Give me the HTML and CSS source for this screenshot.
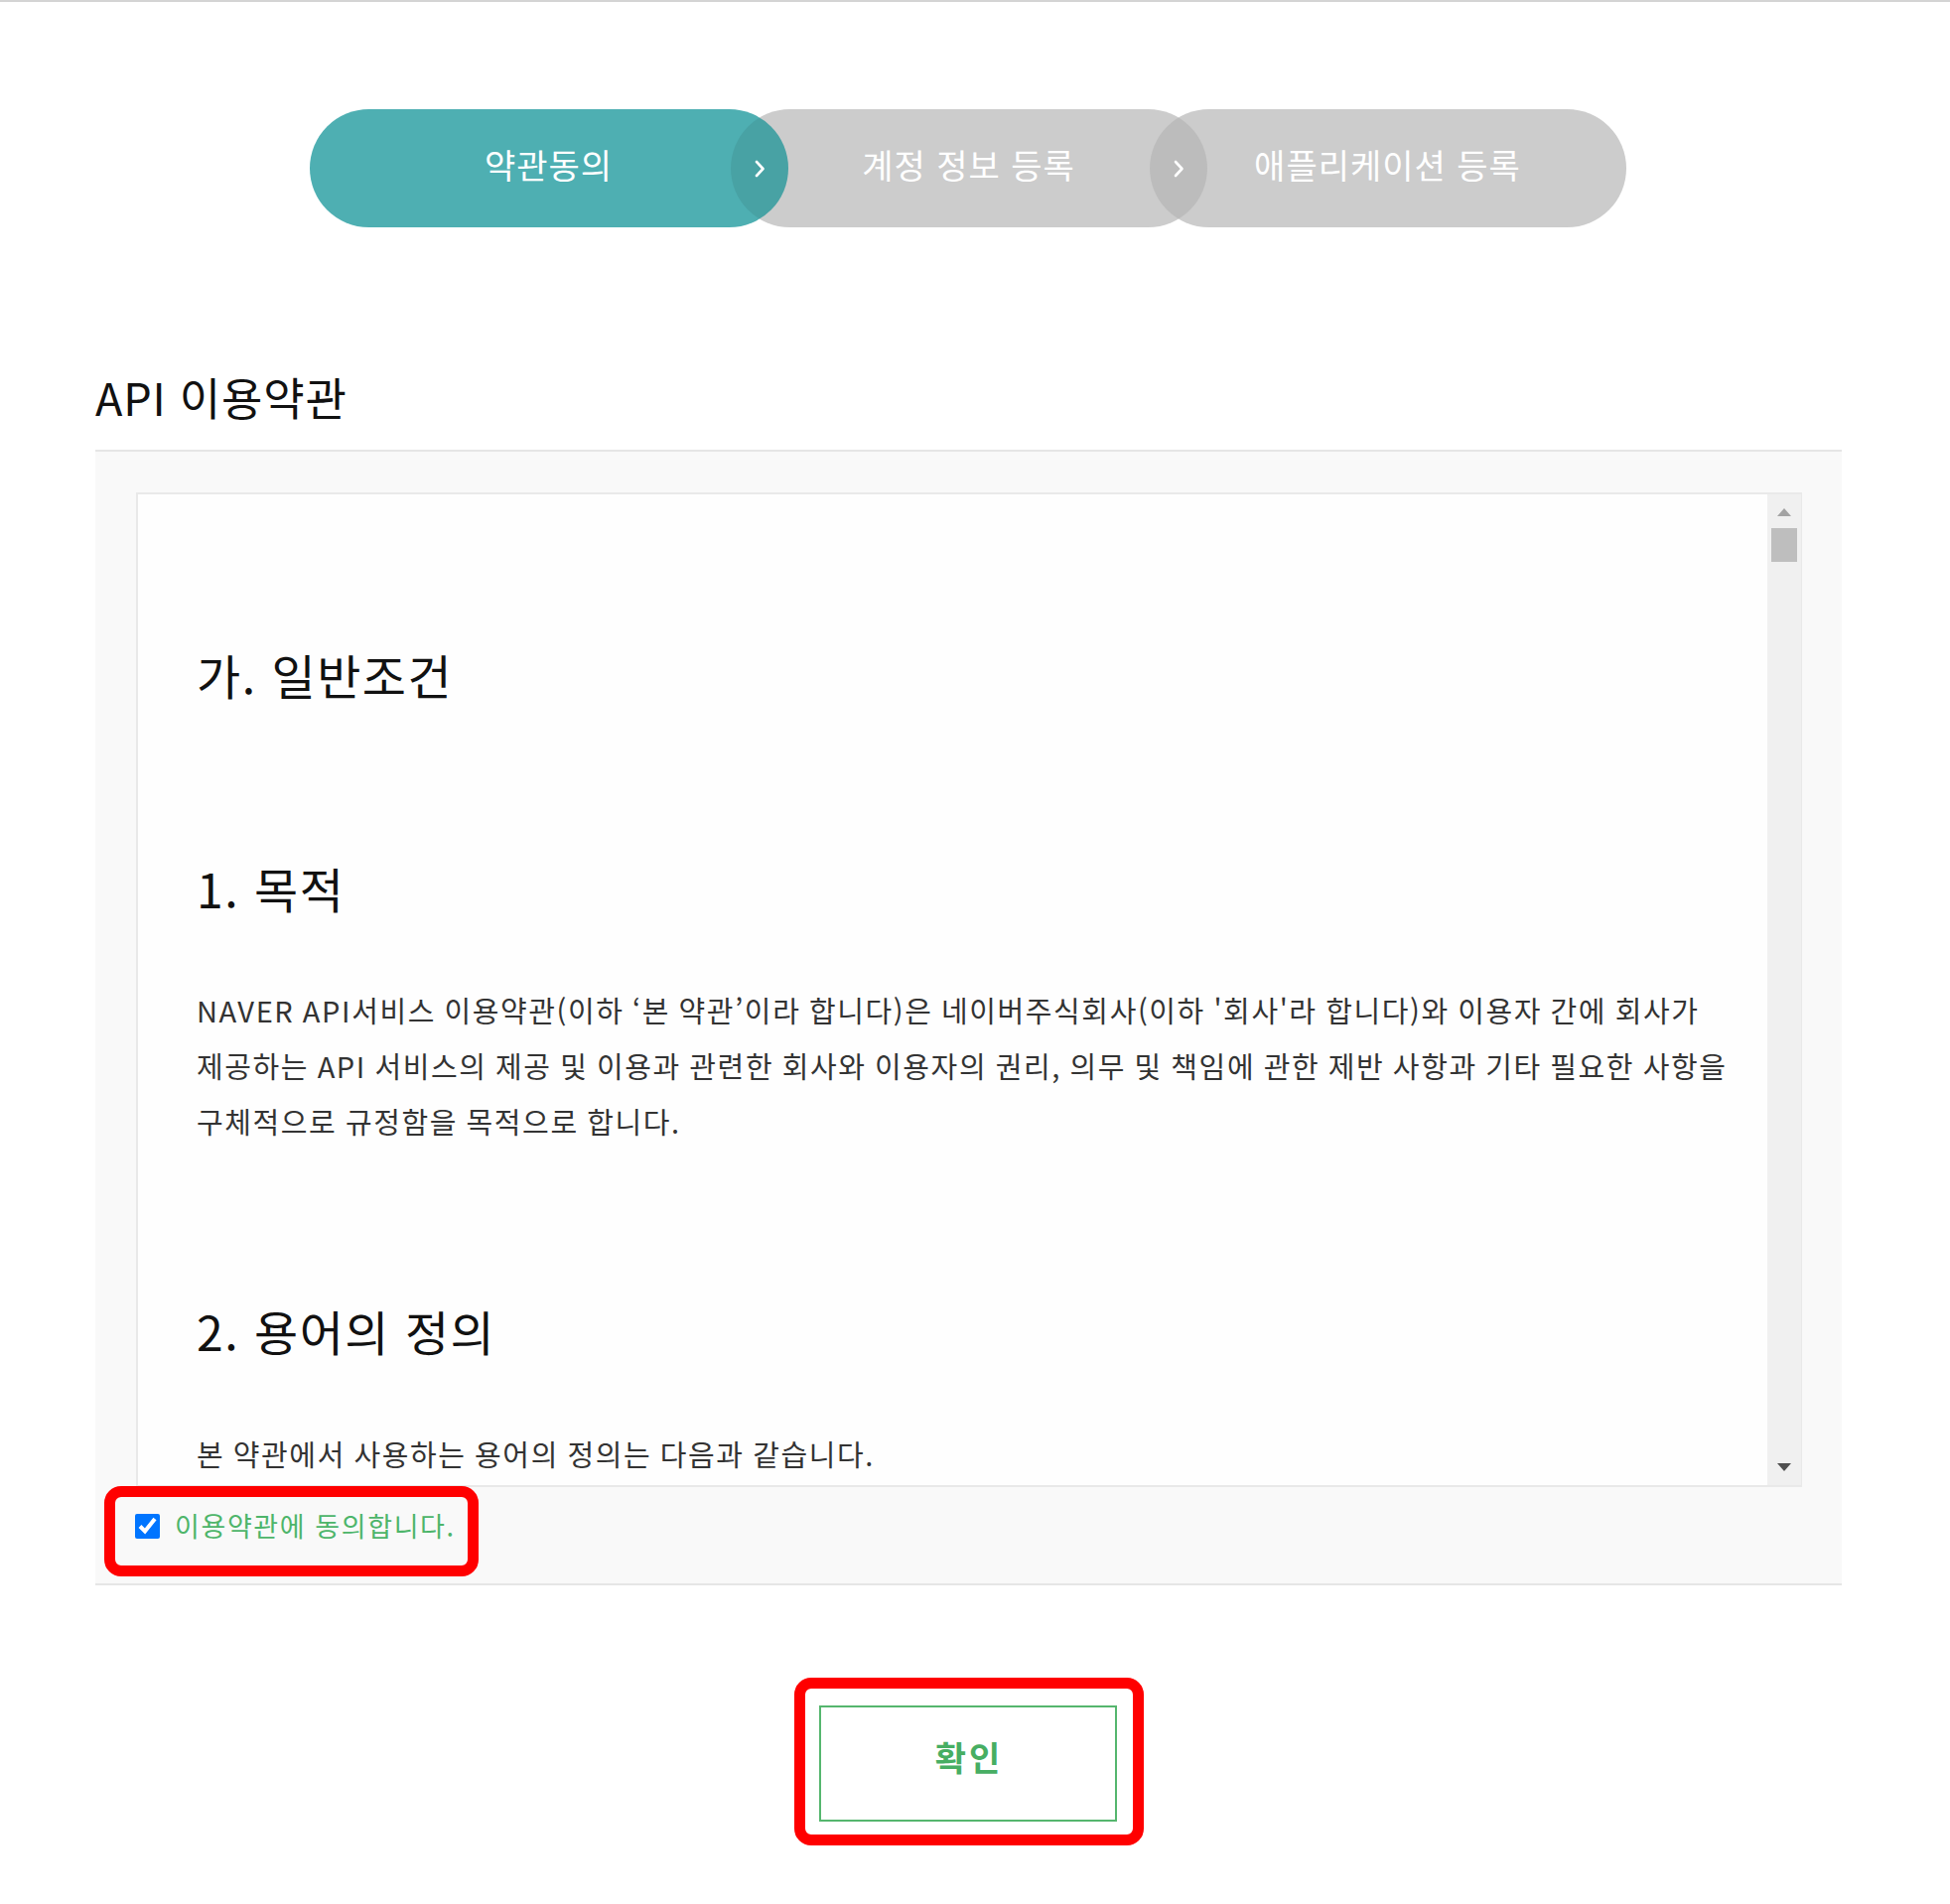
FILE: index.html
```html
<!DOCTYPE html>
<html lang="ko">
<head>
<meta charset="utf-8">
<title>API 이용약관</title>
<link rel="stylesheet" href="styles.css">
</head>
<body>
<div class="topline"></div>
<div class="page">
  <div class="steps">
    <div class="step step-active"><span class="step-label">약관동의</span><span class="chev"><svg width="14" height="20" viewBox="0 0 14 20"><path d="M4 3 L10.5 10 L4 17" fill="none" stroke="#fff" stroke-width="2.6" stroke-linecap="round" stroke-linejoin="round"/></svg></span></div>
    <div class="step step-two"><span class="step-label">계정 정보 등록</span><span class="chev"><svg width="14" height="20" viewBox="0 0 14 20"><path d="M4 3 L10.5 10 L4 17" fill="none" stroke="#fff" stroke-width="2.6" stroke-linecap="round" stroke-linejoin="round"/></svg></span></div>
    <div class="step step-three"><span class="step-label">애플리케이션 등록</span></div>
  </div>

  <h1 class="title">API 이용약관</h1>

  <div class="terms-panel">
    <div class="terms-box">
      <div class="terms-text">
        <h2 class="terms-h terms-h-first">가. 일반조건</h2>
        <h3 class="terms-h terms-h-second">1. 목적</h3>
        <p class="terms-p">NAVER API서비스 이용약관(이하 ‘본 약관’이라 합니다)은 네이버주식회사(이하 '회사'라 합니다)와 이용자 간에 회사가<br>제공하는 API 서비스의 제공 및 이용과 관련한 회사와 이용자의 권리, 의무 및 책임에 관한 제반 사항과 기타 필요한 사항을<br>구체적으로 규정함을 목적으로 합니다.</p>
        <h3 class="terms-h">2. 용어의 정의</h3>
        <p class="terms-p terms-p-last">본 약관에서 사용하는 용어의 정의는 다음과 같습니다.</p>
      </div>
      <div class="scrollbar">
        <span class="sb-up"></span>
        <span class="sb-thumb"></span>
        <span class="sb-fill"></span>
        <span class="sb-down"></span>
      </div>
    </div>
    <label class="agree"><input class="agree-check" type="checkbox" checked><span class="agree-text">이용약관에 동의합니다.</span></label>
  </div>

  <div class="actions">
    <button class="btn-confirm" type="button">확인</button>
  </div>

  <div class="mark mark-agree"></div>
  <div class="mark mark-confirm"></div>
</div>
</body>
</html>
```

FILE: styles.css
```css
html, body {
  margin: 0;
  padding: 0;
  background: #ffffff;
}
body {
  font-family: "Noto Sans CJK KR", "Noto Sans", sans-serif;
  color: #222;
}
.topline {
  height: 2px;
  background: #d4d4d4;
}
.page {
  position: relative;
  width: 1759px;
  margin-left: 96px;
  padding-top: 108px;
  padding-bottom: 70px;
}

/* steps */
.steps {
  display: flex;
  justify-content: center;
  padding-right: 2px;
}
.step {
  position: relative;
  width: 480px;
  height: 119px;
  border-radius: 60px;
  background: #cccccc;
  color: #ffffff;
  font-size: 34px;
  letter-spacing: 1px;
  display: flex;
  align-items: center;
  justify-content: center;
  overflow: hidden;
  margin-left: -58px;
}
.step-label {
  padding-bottom: 8px;
}
.step:first-child { margin-left: 0; width: 482px; }
.step-active { background: #4eafb2; z-index: 3; }
.step-two { z-index: 2; }
.step-three { z-index: 1; }
.step-active::after,
.step-two::after {
  content: "";
  position: absolute;
  top: 0;
  left: calc(100% - 58px);
  width: 119px;
  height: 119px;
  border-radius: 50%;
  background: rgba(0, 0, 0, 0.075);
}
.chev {
  position: absolute;
  top: 50%;
  right: 22px;
  width: 14px;
  height: 20px;
  margin-top: -10px;
  z-index: 1;
  display: flex;
}

/* title */
.title {
  margin: 144px 0 27px;
  font-size: 45px;
  line-height: 53px;
  font-weight: 400;
  color: #111;
  letter-spacing: 0.8px;
}

/* panel */
.terms-panel {
  background: #f9f9f9;
  border-top: 2px solid #e6e6e6;
  border-bottom: 2px solid #e6e6e6;
  padding: 41px 40px 43px 41px;
}
.terms-box {
  display: flex;
  height: 1002px;
  box-sizing: border-box;
  border: 2px solid #e9e9e9;
  border-right-width: 1px;
  background: #fefefe;
}
.terms-text {
  flex: 1;
  overflow: hidden;
  padding: 0 20px 0 59px;
}
.terms-h {
  margin: 149px 0 0;
  font-size: 48px;
  line-height: 69px;
  font-weight: 400;
  color: #111;
  letter-spacing: 1.5px;
}
.terms-h-first {
  margin-top: 147px;
}
.terms-h-second {
  margin-top: 146px;
}
.terms-p {
  margin: 60px 0 0;
  font-size: 29px;
  line-height: 56px;
  color: #333;
  letter-spacing: 1.6px;
  word-spacing: -1.2px;
  white-space: nowrap;
}
.terms-p-last {
  margin-top: 61px;
}

/* fake scrollbar */
.scrollbar {
  width: 34px;
  background: #f0f0f0;
  display: flex;
  flex-direction: column;
  align-items: center;
}
.sb-up {
  margin-top: 14px;
  width: 0;
  height: 0;
  border-left: 7px solid transparent;
  border-right: 7px solid transparent;
  border-bottom: 8px solid #a3a3a3;
}
.sb-thumb {
  margin-top: 12px;
  width: 26px;
  height: 34px;
  background: #bebebe;
}
.sb-fill { flex: 1; }
.sb-down {
  margin-bottom: 14px;
  width: 0;
  height: 0;
  border-left: 7px solid transparent;
  border-right: 7px solid transparent;
  border-top: 8px solid #505050;
}

/* agree */
.agree {
  display: flex;
  align-items: center;
  gap: 15px;
  margin-top: 24px;
  height: 30px;
}
.agree-check {
  width: 25px;
  height: 25px;
  margin: 0 0 0 -1px;
  accent-color: #0075ff;
}
.agree-text {
  font-size: 27px;
  line-height: 30px;
  color: #4db56a;
  letter-spacing: 1.6px;
}

/* button */
.actions {
  display: flex;
  justify-content: center;
  margin-top: 121px;
  padding-right: 2px;
}
.btn-confirm {
  width: 300px;
  height: 117px;
  border: 2px solid #55b66e;
  background: #ffffff;
  color: #47ae63;
  font-family: "Noto Sans CJK KR", "Noto Sans", sans-serif;
  font-size: 34px;
  font-weight: 700;
  letter-spacing: 3px;
  padding: 0 0 14px 3px;
}

/* red annotation marks */
.mark {
  position: absolute;
  border: 11px solid #ff0000;
  border-radius: 17px;
  box-sizing: border-box;
}
.mark-agree {
  left: 9px;
  top: 1495px;
  width: 377px;
  height: 91px;
}
.mark-confirm {
  left: 704px;
  top: 1688px;
  width: 352px;
  height: 169px;
}
```
